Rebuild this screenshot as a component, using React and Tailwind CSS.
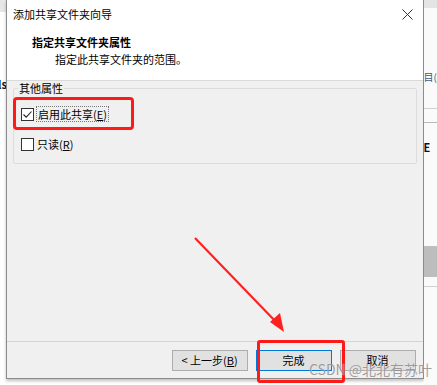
import React from "react";

const font = { fontFamily: '"Noto Sans CJK SC", "Liberation Sans", sans-serif' };

const Checkbox = ({ checked }) => (
  <span className="w-[13px] h-[13px] border border-[#333333] bg-white flex items-center justify-center shrink-0">
    {checked && (
      <svg width="11" height="11" viewBox="0 0 11 11">
        <path d="M1.5 5.5 L4.2 8.2 L9.5 2.5" fill="none" stroke="#222" strokeWidth="1.1" />
      </svg>
    )}
  </span>
);

const Button = ({ children, primary }) => (
  <button
    className={
      primary
        ? "w-[76px] h-[21px] bg-[#e1e1e1] border border-[#0078d7] text-[11px] text-black flex items-center justify-center"
        : "w-[76px] h-[21px] bg-[#e1e1e1] border border-[#adadad] text-[11px] text-black flex items-center justify-center"
    }
  >
    {children}
  </button>
);

const App = () => {
  return (
    <div className="relative w-[437px] h-[385px] bg-white overflow-hidden flex" style={font}>
      {/* left edge of the desktop */}
      <div className="w-[6px] flex flex-col">
        <div className="h-[12px] bg-[#e6e6e6]" />
        <div className="mt-[66px] text-[11px] font-bold text-[#1a1a2e] leading-[12px] -ml-[2px]">ls</div>
      </div>

      {/* wizard dialog */}
      <div className="w-[425px] h-[379px] flex flex-col border-x border-b border-[#8c8c8c] shadow-[0_2px_3px_rgba(0,0,0,0.25)]">
        <div className="h-[81px] bg-white border-b border-[#d9d9d9]">
          <div className="h-[28px] flex items-center justify-between pl-[6px] pr-[10px]">
            <span className="text-[11px] text-black">添加共享文件夹向导</span>
            <svg width="11" height="11" viewBox="0 0 11 11">
              <path d="M0.5 0.5 L10.5 10.5 M10.5 0.5 L0.5 10.5" stroke="#333" strokeWidth="1" />
            </svg>
          </div>
          <p className="mt-[7px] pl-[25px] text-[11px] leading-[14px] font-bold text-black">指定共享文件夹属性</p>
          <p className="mt-[3px] pl-[48px] text-[11px] leading-[14px] text-black">指定此共享文件夹的范围。</p>
        </div>

        <div className="flex-1 bg-[#f0f0f0] px-[6px] pt-[7px]">
          <div className="relative h-[76px] border border-[#dcdcdc] rounded-[2px] pl-[7px] pt-[17px] flex flex-col gap-[15px]">
            <span className="absolute -top-[8px] left-[4px] bg-[#f0f0f0] px-[1px] text-[11px] leading-[14px] text-black">
              其他属性
            </span>
            <div className="flex items-center gap-[2px]">
              <Checkbox checked />
              <span className="border border-dotted border-[#777] px-[1px] text-[11px] leading-[14px] text-black">
                启用此共享(<span className="underline">E</span>)
              </span>
            </div>
            <div className="flex items-center gap-[3px]">
              <Checkbox />
              <span className="text-[11px] leading-[14px] text-black">
                只读(<span className="underline">R</span>)
              </span>
            </div>
          </div>
        </div>

        <div className="h-[37px] bg-[#f0f0f0] border-t border-[#d4d4d4] flex justify-end gap-[8px] pt-[8px] pr-[7px]">
          <Button>
            &lt; 上一步(<span className="underline">B</span>)
          </Button>
          <Button primary>完成</Button>
          <Button>取消</Button>
        </div>
      </div>

      {/* right edge of the desktop */}
      <div className="flex-1 flex flex-col bg-[#fafafa]">
        <div className="h-[8px] bg-[#e4e4e4]" />
        <div className="mt-[64px] text-[10px] leading-[10px] text-[#3a5a8a] whitespace-nowrap">目(</div>
        <div className="mt-[26px] h-[1px] bg-[#d0d0d0]" />
        <div className="mt-[13px] h-[1px] bg-[#b8b8b8]" />
        <div className="mt-[18px] text-[11px] leading-[12px] font-bold text-[#111]">E</div>
        <div className="mt-[93px] h-[1px] bg-[#c0c0c0]" />
        <div className="h-[30px] bg-[#bdbdbd]" />
        <div className="mt-[9px] h-[1px] bg-[#d0d0d0]" />
      </div>

      {/* annotations drawn over the screenshot */}
      <div className="absolute left-[13px] top-[97px] w-[121px] h-[33px] border-[3px] border-[#ff1a1a] rounded-[4px]" />
      <div className="absolute left-[257px] top-[340px] w-[88px] h-[43px] border-[3px] border-[#ff1a1a] rounded-[3px]" />
      <svg className="absolute left-0 top-0" width="437" height="385">
        <line x1="195" y1="238" x2="278" y2="324" stroke="#ff2020" strokeWidth="2.2" />
        <path d="M284 332 L270 322 L280 313 Z" fill="#ff2020" />
      </svg>
      <div className="absolute left-[309px] top-[360px] whitespace-nowrap text-[14px] leading-[18px] text-[#8a8a8a] opacity-80 [text-shadow:0_0_1px_#fff]">
        CSDN @北北有苏叶
      </div>
    </div>
  );
};

export default App;
